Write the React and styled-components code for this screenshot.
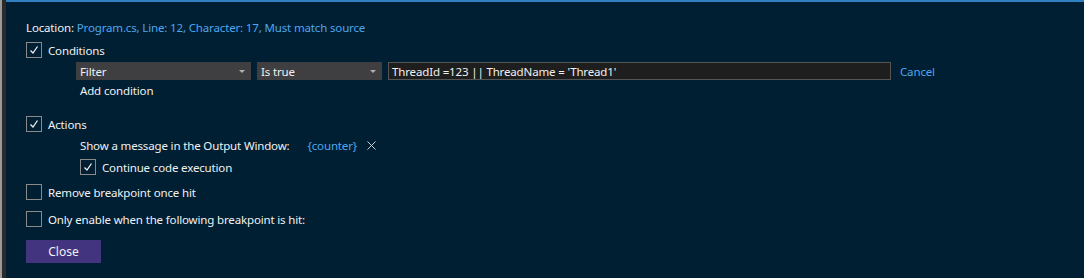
import React from 'react'
import styled, { createGlobalStyle } from 'styled-components'

const GlobalStyle = createGlobalStyle`
  html, body { margin: 0; padding: 0; background: #001f33; }
  body { font-family: "Noto Sans", "Open Sans", sans-serif; font-size: 11.5px; letter-spacing: -0.15px; }
`

const Frame = styled.div`
  display: flex;
  width: 1084px;
  height: 278px;
  background: #001f33;
  border-left: 2px solid #9a9a9a;
  box-sizing: border-box;
`

const Gutter = styled.div`
  width: 4px;
  background: #2a2a2a;
`

const Panel = styled.div`
  flex: 1;
  border-top: 2px solid #2f7fc1;
  padding: 17px 0 0 20px;
  color: #f1f1f1;
  display: flex;
  flex-direction: column;
`

const Line = styled.div`
  display: flex;
  align-items: center;
  height: ${p => p.h || 16}px;
  margin-top: ${p => p.mt || 0}px;
  padding-left: ${p => p.indent || 0}px;
  white-space: nowrap;
`

const Link = styled.span`
  color: #4ea6ee;
  margin-left: ${p => p.ml || 0}px;
`

const Box = styled.span`
  width: 14px;
  height: 14px;
  border: 1px solid #8a8a8a;
  display: inline-flex;
  align-items: center;
  justify-content: center;
  margin-right: 6px;
  flex-shrink: 0;
`

const Select = styled.div`
  width: ${p => p.w}px;
  height: 18px;
  background: #3f3f41;
  color: #f1f1f1;
  display: flex;
  align-items: center;
  justify-content: space-between;
  padding: 0 6px 0 4px;
  box-sizing: border-box;
  margin-right: 6px;
`

const Arrow = styled.span`
  width: 0;
  height: 0;
  border-left: 3px solid transparent;
  border-right: 3px solid transparent;
  border-top: 3px solid #b0b0b0;
`

const Input = styled.div`
  width: 503px;
  height: 18px;
  background: #1e1e1e;
  border: 1px solid #555;
  box-sizing: border-box;
  padding-left: 3px;
  display: flex;
  align-items: center;
`

const Close = styled.button`
  width: 75px;
  height: 23px;
  background: #433480;
  color: #f1f1f1;
  border: none;
  font: inherit;
  font-size: 12px;
  padding: 0;
  margin-top: ${p => p.mt}px;
`

const Remove = styled.svg`
  margin-left: 10px;
`

const Check = ({ on }) => (
  <Box>
    {on && (
      <svg width="12" height="12" viewBox="0 0 12 12">
        <path d="M2.5 6.5 L5 9 L9.5 2.5" fill="none" stroke="#f1f1f1" strokeWidth="1.3" />
      </svg>
    )}
  </Box>
)

export default function App() {
  return (
    <>
      <GlobalStyle />
      <Frame>
        <Gutter />
        <Panel>
          <Line>
            Location:&nbsp;<Link>Program.cs, Line: 12, Character: 17, Must match source</Link>
          </Line>
          <Line mt={7}><Check on />Conditions</Line>
          <Line mt={4} h={18} indent={50}>
            <Select w={175}>Filter<Arrow /></Select>
            <Select w={125}>Is true<Arrow /></Select>
            <Input>ThreadId =123 || ThreadName = 'Thread1'</Input>
            <Link ml={9}>Cancel</Link>
          </Line>
          <Line mt={2} indent={54}>Add condition</Line>
          <Line mt={18}><Check on />Actions</Line>
          <Line mt={5} indent={54}>
            Show a message in the Output Window:<Link ml={18}>{'{counter}'}</Link>
            <Remove width="9" height="9" viewBox="0 0 9 9">
              <path d="M0.5 0.5 L8.5 8.5 M8.5 0.5 L0.5 8.5" stroke="#d0d0d0" strokeWidth="1" fill="none" />
            </Remove>
          </Line>
          <Line mt={6} indent={54}><Check on />Continue code execution</Line>
          <Line mt={9}><Check />Remove breakpoint once hit</Line>
          <Line mt={11}><Check />Only enable when the following breakpoint is hit:</Line>
          <div><Close mt={13}>Close</Close></div>
        </Panel>
      </Frame>
    </>
  )
}
